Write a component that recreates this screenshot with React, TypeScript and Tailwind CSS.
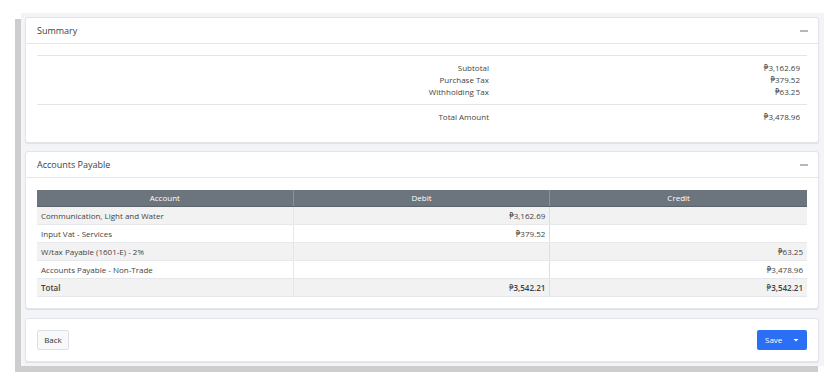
import React from "react";

const font = { fontFamily: '"Open Sans", "Noto Sans", "DejaVu Sans", sans-serif' };

function Minus() {
  return <span className="block w-[8px] h-[2px] bg-[#b4b8bc] mr-[-1px]" />;
}

function CardHeader({ title }: { title: string }) {
  return (
    <div className="flex items-center justify-between h-[26px] px-[11px] border-b border-[#e4e6ea]">
      <span className="text-[9px] text-[#3a3f44]">{title}</span>
      <Minus />
    </div>
  );
}

function Peso({ v }: { v: string }) {
  return (
    <span>
      <span style={{ fontFamily: '"Noto Sans", "DejaVu Sans", sans-serif' }} className="font-normal">₱</span>
      {v}
    </span>
  );
}

const summaryRows = [
  ["Subtotal", "3,162.69"],
  ["Purchase Tax", "379.52"],
  ["Withholding Tax", "63.25"],
];

const tableRows: [string, string, string][] = [
  ["Communication, Light and Water", "3,162.69", ""],
  ["Input Vat - Services", "379.52", ""],
  ["W/tax Payable (1601-E) - 2%", "", "63.25"],
  ["Accounts Payable - Non-Trade", "", "3,478.96"],
];

export default function App() {
  return (
    <div className="w-[837px] h-[388px] bg-white pt-[13px] pl-[21px]" style={font}>
      <div className="w-[803px] h-[353px] bg-[#f3f4f7] shadow-[-6px_6px_0_#cdcdcd] pt-[4px] pl-[4px] pr-[5px] flex flex-col">
        {/* Summary */}
        <div className="h-[126px] bg-white border border-[#e2e4e8] rounded-[3px] shadow-[0_1px_1px_rgba(0,0,0,0.08)]">
          <CardHeader title="Summary" />
          <div className="px-[11px] pt-[11px]">
            <div className="border-t border-[#e2e4e8]" />
            <div className="pt-[6px] pb-[6px]">
              {summaryRows.map(([l, v]) => (
                <div key={l} className="flex h-[12px] items-center text-[8px] text-[#444]">
                  <div className="w-[452px] text-right">{l}</div>
                  <div className="flex-1 text-right pr-[7px]"><Peso v={v} /></div>
                </div>
              ))}
            </div>
            <div className="border-t border-[#e2e4e8]" />
            <div className="pt-[6px]">
              <div className="flex h-[12px] items-center text-[8px] text-[#444]">
                <div className="w-[452px] text-right">Total Amount</div>
                <div className="flex-1 text-right pr-[7px]"><Peso v="3,478.96" /></div>
              </div>
            </div>
          </div>
        </div>

        {/* Accounts Payable */}
        <div className="mt-[8px] h-[158px] bg-white border border-[#e2e4e8] rounded-[3px] shadow-[0_1px_1px_rgba(0,0,0,0.08)]">
          <CardHeader title="Accounts Payable" />
          <div className="px-[11px] pt-[12px]">
            <div className="text-[8px] text-[#444]">
              <div className="grid grid-cols-3 h-[17px] bg-[#6c757d] text-white border-b border-[#5c646b]">
                <div className="flex items-center justify-center border-r border-[#8a9299]">Account</div>
                <div className="flex items-center justify-center border-r border-[#8a9299]">Debit</div>
                <div className="flex items-center justify-center">Credit</div>
              </div>
              {tableRows.map((r, i) => (
                <div
                  key={r[0]}
                  className={`grid grid-cols-3 h-[18px] border-b border-[#e6e8eb] ${i % 2 === 0 ? "bg-[#f2f2f2]" : "bg-white"}`}
                >
                  <div className="flex items-center px-[4px] border-r border-[#e3e6ea]">{r[0]}</div>
                  <div className="flex items-center justify-end px-[4px] border-r border-[#d8dfe6]">{r[1] && <Peso v={r[1]} />}</div>
                  <div className="flex items-center justify-end px-[4px]">{r[2] && <Peso v={r[2]} />}</div>
                </div>
              ))}
              <div className="grid grid-cols-3 h-[18px] bg-[#f2f2f2] font-semibold text-[#3a3f44] border-b border-[#e6e8eb]">
                <div className="flex items-center px-[4px] border-r border-[#e3e6ea]">Total</div>
                <div className="flex items-center justify-end px-[4px] border-r border-[#d8dfe6]"><Peso v="3,542.21" /></div>
                <div className="flex items-center justify-end px-[4px]"><Peso v="3,542.21" /></div>
              </div>
            </div>
          </div>
        </div>

        {/* Footer */}
        <div className="mt-[9px] h-[44px] bg-white border border-[#e2e4e8] rounded-[3px] shadow-[0_1px_1px_rgba(0,0,0,0.08)] flex items-center justify-between px-[11px]">
          <button className="h-[20px] w-[32px] border border-[#dcdfe3] rounded-[2px] bg-[#f8f9fa] text-[8px] text-[#333] flex items-center justify-center">
            Back
          </button>
          <div className="h-[20px] w-[50px] bg-[#2b6ff7] rounded-[2px] flex items-center text-white text-[8px]">
            <span className="pl-[8px] flex-1">Save</span>
            <svg width="8" height="8" viewBox="0 0 8 8" className="mr-[7px]">
              <path d="M1.5 3 L4 5.5 L6.5 3 Z" fill="white" />
            </svg>
          </div>
        </div>
      </div>
    </div>
  );
}
